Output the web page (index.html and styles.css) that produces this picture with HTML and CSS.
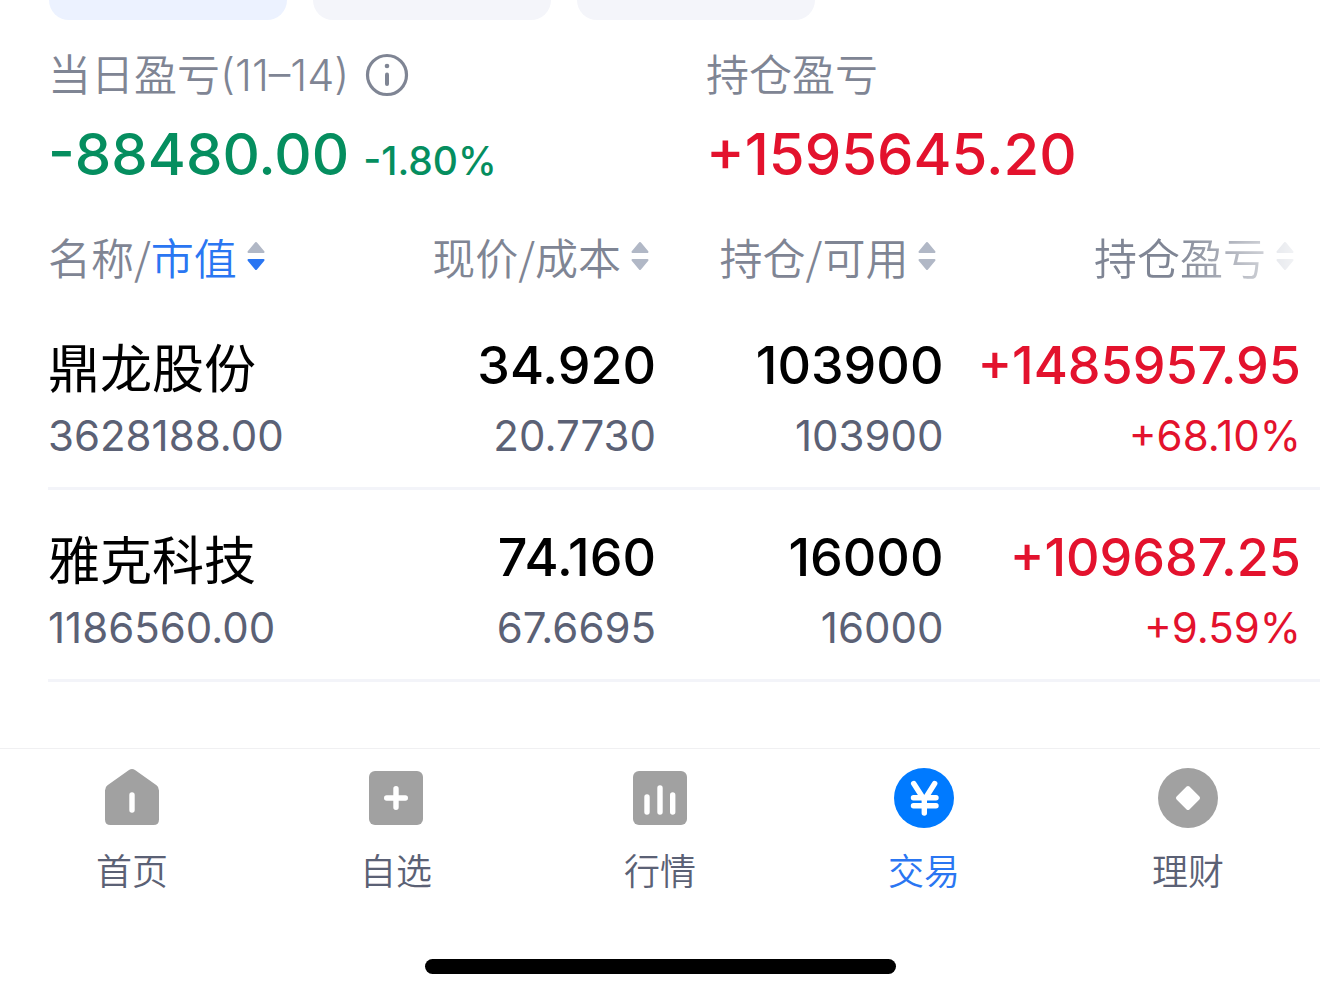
FILE: index.html
```html
<!DOCTYPE html>
<html lang="zh-CN">
<head>
<meta charset="utf-8">
<meta name="viewport" content="width=device-width, initial-scale=1">
<title>持仓</title>
<link rel="stylesheet" href="styles.css">
</head>
<body>
<svg class="defs" aria-hidden="true">
  <symbol id="sort" viewBox="0 0 20 30">
    <path class="sort-up" d="M10 2 17.500 11H2.500Z"/>
    <path class="sort-down" d="M10 28 17.500 19H2.500Z"/>
  </symbol>
</svg>
<main class="content">
  <div class="pills">
    <span class="pill pill-active"></span>
    <span class="pill"></span>
    <span class="pill"></span>
  </div>

  <section class="summary">
    <div class="summary-item">
      <div class="label">
        <span>当日盈亏(11–14)</span>
        <svg class="info" viewBox="0 0 44 44" aria-hidden="true">
          <circle cx="22" cy="22" r="19.5" fill="none" stroke="currentColor" stroke-width="3.2"/>
          <circle cx="22" cy="13" r="2.3" fill="currentColor"/>
          <path d="M22 21.5V31" stroke="currentColor" stroke-width="4" stroke-linecap="round"/>
        </svg>
      </div>
      <div class="amount down"><span>-88480.00</span><span class="rate">-1.80%</span></div>
    </div>
    <div class="summary-item">
      <div class="label"><span>持仓盈亏</span></div>
      <div class="amount up"><span>+1595645.20</span></div>
    </div>
  </section>

  <table class="holdings">
    <colgroup><col class="col-name"><col class="col-price"><col class="col-qty"><col class="col-profit"></colgroup>
    <thead>
      <tr>
        <th><button class="sort sort-desc" type="button"><span>名称/<em>市值</em></span><svg class="arrows" aria-hidden="true"><use href="#sort"/></svg></button></th>
        <th><button class="sort" type="button"><span>现价/成本</span><svg class="arrows" aria-hidden="true"><use href="#sort"/></svg></button></th>
        <th><button class="sort" type="button"><span>持仓/可用</span><svg class="arrows" aria-hidden="true"><use href="#sort"/></svg></button></th>
        <th><button class="sort sort-faded" type="button"><span>持仓盈亏</span><svg class="arrows" aria-hidden="true"><use href="#sort"/></svg></button></th>
      </tr>
    </thead>
    <tbody>
      <tr>
        <td><div class="primary name">鼎龙股份</div><div class="secondary">3628188.00</div></td>
        <td><div class="primary">34.920</div><div class="secondary">20.7730</div></td>
        <td><div class="primary">103900</div><div class="secondary">103900</div></td>
        <td class="up"><div class="primary">+1485957.95</div><div class="secondary">+68.10%</div></td>
      </tr>
      <tr>
        <td><div class="primary name">雅克科技</div><div class="secondary">1186560.00</div></td>
        <td><div class="primary">74.160</div><div class="secondary">67.6695</div></td>
        <td><div class="primary">16000</div><div class="secondary">16000</div></td>
        <td class="up"><div class="primary">+109687.25</div><div class="secondary">+9.59%</div></td>
      </tr>
    </tbody>
  </table>
</main>

<footer class="footer">
  <nav class="tabs">
    <a class="tab" href="#home">
      <svg class="tab-icon" viewBox="0 0 60 60" aria-hidden="true">
        <path fill="currentColor" d="M27 2Q30 0 33 2L54.500 17.300Q57 19 57 22.500V51.500Q57 57 51.500 57H8.500Q3 57 3 51.500V22.500Q3 19 5.500 17.300Z"/>
        <path class="cut" d="M30 27V42"/>
      </svg>
      <span>首页</span>
    </a>
    <a class="tab" href="#watchlist">
      <svg class="tab-icon" viewBox="0 0 60 60" aria-hidden="true">
        <rect x="3" y="3" width="54" height="54" rx="6" fill="currentColor"/>
        <path class="cut" d="M30 20.700V39.300M20.700 30H39.300"/>
      </svg>
      <span>自选</span>
    </a>
    <a class="tab" href="#market">
      <svg class="tab-icon" viewBox="0 0 60 60" aria-hidden="true">
        <rect x="3" y="3" width="54" height="54" rx="6" fill="currentColor"/>
        <path class="cut" d="M17 29V44M30 20V44M42.700 27V44"/>
      </svg>
      <span>行情</span>
    </a>
    <a class="tab tab-current" href="#trade" aria-current="page">
      <svg class="tab-icon" viewBox="0 0 60 60" aria-hidden="true">
        <circle cx="30" cy="30" r="30" fill="currentColor"/>
        <path class="cut" d="M19.700 15.500 30.300 32 40.700 15.500M19.500 29.700H42M19.500 37.700H42M30.300 31V45"/>
      </svg>
      <span>交易</span>
    </a>
    <a class="tab" href="#wealth">
      <svg class="tab-icon" viewBox="0 0 60 60" aria-hidden="true">
        <circle cx="30" cy="30" r="30" fill="currentColor"/>
        <path d="M30 20 40 30 30 40 20 30Z" fill="#fff" stroke="#fff" stroke-width="4" stroke-linejoin="round"/>
      </svg>
      <span>理财</span>
    </a>
  </nav>
  <div class="home-indicator"></div>
</footer>
</body>
</html>
```
FILE: styles.css
```css
* {
  box-sizing: border-box;
}

body {
  margin: 0;
  min-height: 100vh;
  display: flex;
  flex-direction: column;
  background: #fff;
  color: #000;
  font-family: Inter, "Noto Sans CJK SC", sans-serif;
}

.defs {
  display: none;
}

.content {
  flex: 1;
}

.pills {
  display: flex;
  gap: 26px;
  padding-left: 49px;
}

.pill {
  width: 238px;
  height: 20px;
  border-radius: 0 0 20px 20px;
  background: #f4f5fa;
}

.pill-active {
  background: #ecf2ff;
}

.summary {
  display: grid;
  grid-template-columns: 1fr 1fr;
  column-gap: 44px;
  padding: 24px 0 0 48px;
}

.label {
  display: flex;
  align-items: center;
  gap: 16px;
  color: #7f8594;
  font-size: 43px;
  font-weight: 350;
  line-height: 62px;
}

.info {
  width: 44px;
  height: 44px;
}

.amount {
  display: flex;
  align-items: baseline;
  gap: 14px;
  font-size: 58px;
  font-weight: 500;
  line-height: 96px;
  white-space: nowrap;
}

.rate {
  font-size: 39px;
}

.up {
  color: #e3122d;
}

.down {
  color: #058e5f;
}

.holdings {
  width: calc(100% - 48px);
  margin: 4px 0 0 48px;
  border-collapse: collapse;
  table-layout: fixed;
}

.col-name {
  width: 25.2%;
}

.col-price,
.col-qty {
  width: 22.6%;
}

.holdings th,
.holdings td {
  padding: 0;
  text-align: right;
  white-space: nowrap;
}

.holdings th:first-child,
.holdings td:first-child {
  text-align: left;
}

.holdings th:last-child,
.holdings td:last-child {
  padding-right: 19px;
}

.holdings th {
  height: 85px;
}

.holdings td {
  padding: 32px 0 17px;
  border-bottom: 3px solid #f3f4f9;
}

.sort {
  display: inline-flex;
  align-items: center;
  gap: 9px;
  margin: 0;
  padding: 0 6px 0 0;
  border: 0;
  background: none;
  color: #7f8594;
  font-family: "Noto Sans CJK SC", sans-serif;
  font-size: 43px;
  font-weight: 350;
  line-height: 62px;
}

.sort em {
  color: #2a76f2;
  font-style: normal;
}

.arrows {
  width: 20px;
  height: 30px;
  color: #b1b8c6;
  fill: currentColor;
  stroke: currentColor;
  stroke-width: 2;
  stroke-linejoin: round;
}

.sort-down {
  fill: var(--sort-down, currentColor);
  stroke: var(--sort-down, currentColor);
}

.sort-desc {
  --sort-down: #2a76f2;
}

.sort-faded {
  mask-image: linear-gradient(to right, #000 80px, transparent 226px);
}

.primary {
  font-size: 52px;
  font-weight: 500;
  line-height: 72px;
}

.name {
  font-family: "Noto Sans CJK SC", sans-serif;
  font-weight: 400;
}

.secondary {
  color: #5b6175;
  font-size: 42px;
  line-height: 68px;
}

.up .secondary {
  color: inherit;
}

.footer {
  padding-bottom: 24px;
  border-top: 1px solid #f0f0f2;
}

.tabs {
  display: grid;
  grid-template-columns: repeat(5, 1fr);
  padding: 19px 0 63px;
}

.tab {
  display: flex;
  flex-direction: column;
  align-items: center;
  gap: 20px;
  color: #5b6175;
  font-size: 36px;
  font-weight: 350;
  line-height: 48px;
  text-decoration: none;
}

.tab-icon {
  width: 60px;
  height: 60px;
  color: #a1a1a1;
}

.tab-current {
  color: #2a76f2;
}

.tab-current .tab-icon {
  color: #007aff;
}

.cut {
  fill: none;
  stroke: #fff;
  stroke-width: 5.4;
  stroke-linecap: round;
  stroke-linejoin: round;
}

.home-indicator {
  width: 471px;
  max-width: 60%;
  height: 15px;
  margin: 0 auto;
  border-radius: 8px;
  background: #000;
}
```
